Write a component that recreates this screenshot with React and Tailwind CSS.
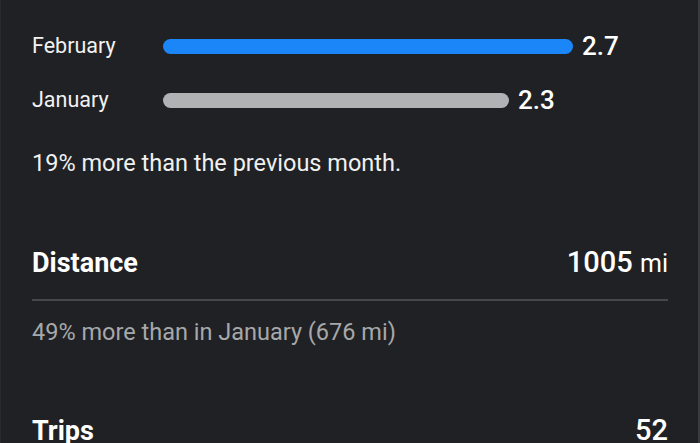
import React from 'react';

const bars = [
  { label: 'February', value: '2.7', width: 'w-[410px]', color: 'bg-[#1b86f7]' },
  { label: 'January', value: '2.3', width: 'w-[346px]', color: 'bg-[#b1b2b4]' },
];

const App = () => {
  return (
    <div
      className="w-[700px] h-[443px] overflow-hidden bg-[#202124] border-l border-l-[#2a2b2e] border-r-2 border-r-[#3a3b3e] text-white pl-[31px] pr-[30px]"
      style={{ fontFamily: 'Roboto, "Liberation Sans", sans-serif' }}
    >
      {/* Comparison bars */}
      <div className="pt-[19px]">
        {bars.map((b) => (
          <div key={b.label} className="h-[54px] flex items-center">
            <div className="w-[131px] text-[21.5px] text-[#f2f2f2]">{b.label}</div>
            <div className={`${b.width} ${b.color} h-[15px] rounded-full`}></div>
            <div className="ml-[9px] text-[26px] font-medium leading-none">{b.value}</div>
          </div>
        ))}
      </div>

      <p className="mt-[22px] text-[23.5px] leading-[28px] text-[#f0f0f0]">19% more than the previous month.</p>

      {/* Distance */}
      <div className="mt-[69px] flex items-baseline justify-between leading-[32px]">
        <h2 className="text-[27px] font-bold">Distance</h2>
        <div className="text-[29px] font-medium">
          1005 <span className="text-[25px] font-normal">mi</span>
        </div>
      </div>
      <div className="mt-[19px] h-[2px] bg-[#46474a]"></div>
      <p className="mt-[17px] text-[23.5px] leading-[28px] text-[#a7a8aa]">49% more than in January (676 mi)</p>

      {/* Trips */}
      <div className="mt-[68px] flex items-baseline justify-between leading-[32px]">
        <h2 className="text-[27px] font-bold">Trips</h2>
        <div className="text-[29px] font-medium">52</div>
      </div>
    </div>
  );
};

export default App;
